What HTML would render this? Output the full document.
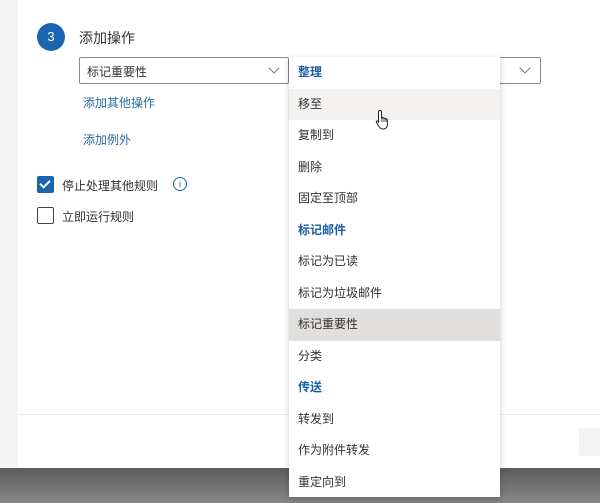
<!DOCTYPE html>
<html><head><meta charset="utf-8"><style>
*{margin:0;padding:0;box-sizing:border-box}
body{width:600px;height:503px;overflow:hidden;position:relative;background:#f4f4f4;font-family:"Liberation Sans","Noto Sans CJK SC",sans-serif;color:#323130;font-size:12px}
.panel{position:absolute;left:18px;top:0;width:582px;height:468px;background:#fff}
.bottom{position:absolute;left:0;top:468px;width:600px;height:35px;background:linear-gradient(#5c5c5c,#878787)}
.abs{position:absolute}
.link{color:#2a6aa8}
.sel{position:absolute;height:27px;border:1px solid #8a8886;border-radius:2px;background:#fff}
.chev{position:absolute;width:8px;height:8px;border-right:1px solid #777;border-bottom:1px solid #777;transform:rotate(45deg)}
.menu{position:absolute;left:289px;top:57px;width:211px;height:440px;background:#fff;box-shadow:0 2px 6px rgba(0,0,0,.22)}
.it{height:31.5px;line-height:31.5px;padding-left:9px;font-size:12px;color:#323130}
.hd{color:#1d5fa3;font-weight:bold}
.hv{background:#f3f2f1}
.sl{background:#e1dfdd}
</style></head><body>
<div class="panel"></div>
<div class="abs" style="left:18px;top:414px;width:582px;height:1px;background:#ececec"></div>
<div class="abs" style="left:579px;top:428px;width:21px;height:28px;background:#f3f3f3;border-radius:2px"></div>
<div class="bottom"></div>
<div class="abs" style="left:37px;top:23px;width:28px;height:28px;border-radius:50%;background:#1b65b0;color:#fff;text-align:center;line-height:28px;font-size:13px">3</div>
<div class="abs" style="left:79px;top:28px;font-size:14px">添加操作</div>
<div class="sel" style="left:79px;top:57px;width:210px"><span class="abs" style="left:7px;top:5px;font-size:12px">标记重要性</span><div class="chev" style="left:190px;top:6px"></div></div>
<div class="sel" style="left:289px;top:57px;width:252px"><div class="chev" style="left:231px;top:6px"></div></div>
<div class="abs link" style="left:83px;top:94px">添加其他操作</div>
<div class="abs link" style="left:83px;top:131px">添加例外</div>
<div class="abs" style="left:37px;top:176px;width:17px;height:17px;background:#1b65b0;border-radius:2px"><div class="abs" style="left:5px;top:2px;width:6px;height:10px;border-right:2px solid #fff;border-bottom:2px solid #fff;transform:rotate(45deg)"></div></div>
<div class="abs" style="left:62px;top:177px">停止处理其他规则</div>
<div class="abs" style="left:173px;top:177px;width:14px;height:14px;border:1px solid #2a6aa8;border-radius:50%;color:#2a6aa8;font-size:9px;text-align:center;line-height:12px">i</div>
<div class="abs" style="left:37px;top:207px;width:17px;height:17px;border:1px solid #444;border-radius:2px;background:#fff"></div>
<div class="abs" style="left:62px;top:208px">立即运行规则</div>
<div class="menu">
<div class="it hd">整理</div>
<div class="it hv">移至</div>
<div class="it">复制到</div>
<div class="it">删除</div>
<div class="it">固定至顶部</div>
<div class="it hd">标记邮件</div>
<div class="it">标记为已读</div>
<div class="it">标记为垃圾邮件</div>
<div class="it sl">标记重要性</div>
<div class="it">分类</div>
<div class="it hd">传送</div>
<div class="it">转发到</div>
<div class="it">作为附件转发</div>
<div class="it">重定向到</div>
</div>
<svg class="abs" style="left:375px;top:109px" width="16" height="22" viewBox="0 0 16 22"><path d="M5 1.5c1 0 1.5.6 1.5 1.5v6l.5-.5c.9-.3 1.6.1 1.8.8.8-.4 1.6 0 1.8.7.8-.3 1.7.1 1.8 1v4.5c0 2.5-1.5 4.5-4 4.5H7.5c-1.5 0-2.5-1-3.5-2.5L1.5 13.5c-.6-1 .3-2 1.3-1.5L3.5 13V3c0-.9.5-1.5 1.5-1.5z" fill="#fff" stroke="#222" stroke-width="1"/><path d="M7 9v4M9 9.5v3.5M11 10v3" stroke="#222" stroke-width=".8"/></svg>
</body></html>
